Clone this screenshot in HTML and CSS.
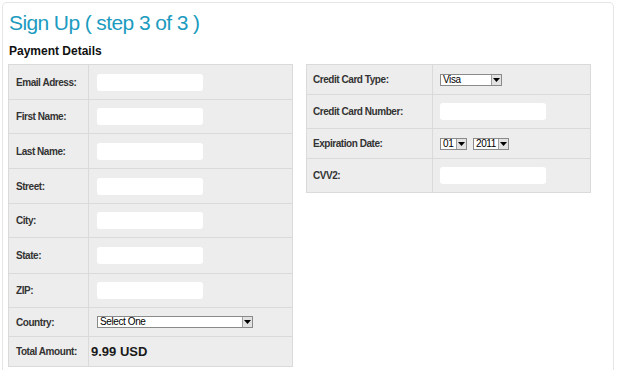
FILE: index.html
```html
<!DOCTYPE html>
<html>
<head>
<meta charset="utf-8">
<title>Sign Up</title>
<link rel="stylesheet" href="styles.css">
</head>
<body>
<div class="panel">
  <h1 class="title">Sign Up ( step 3 of 3 )</h1>
  <h2 class="section">Payment Details</h2>
  <div class="columns">
    <table class="form form-left">
      <tr class="h35"><th>Email Adress:</th><td><input class="field" type="text"></td></tr>
      <tr class="h34"><th>First Name:</th><td><input class="field" type="text"></td></tr>
      <tr class="h35"><th>Last Name:</th><td><input class="field" type="text"></td></tr>
      <tr class="h35"><th>Street:</th><td><input class="field" type="text"></td></tr>
      <tr class="h34"><th>City:</th><td><input class="field" type="text"></td></tr>
      <tr class="h36"><th>State:</th><td><input class="field" type="text"></td></tr>
      <tr class="h34"><th>ZIP:</th><td><input class="field" type="text"></td></tr>
      <tr class="h29"><th>Country:</th><td><span class="select sel-country"><span class="sel-val">Select One</span><span class="sel-arrow"><svg width="7" height="4" viewBox="0 0 7 4"><path d="M0 0H7L3.5 4Z" fill="#000"/></svg></span></span></td></tr>
      <tr class="h30"><th>Total Amount:</th><td class="amount">9.99 USD</td></tr>
    </table>
    <table class="form form-right">
      <tr class="h30"><th>Credit Card Type:</th><td><span class="select sel-type"><span class="sel-val">Visa</span><span class="sel-arrow"><svg width="7" height="4" viewBox="0 0 7 4"><path d="M0 0H7L3.5 4Z" fill="#000"/></svg></span></span></td></tr>
      <tr class="h34"><th>Credit Card Number:</th><td><input class="field" type="text"></td></tr>
      <tr class="h30"><th>Expiration Date:</th><td><div class="date-row"><span class="select sel-month"><span class="sel-val">01</span><span class="sel-arrow"><svg width="7" height="4" viewBox="0 0 7 4"><path d="M0 0H7L3.5 4Z" fill="#000"/></svg></span></span><span class="select sel-year"><span class="sel-val">2011</span><span class="sel-arrow"><svg width="7" height="4" viewBox="0 0 7 4"><path d="M0 0H7L3.5 4Z" fill="#000"/></svg></span></span></div></td></tr>
      <tr class="h34"><th>CVV2:</th><td><input class="field" type="text"></td></tr>
    </table>
  </div>
</div>
</body>
</html>
```

FILE: styles.css
```css
html, body {
  margin: 0;
  padding: 0;
  background: #ffffff;
}

body {
  font-family: "Liberation Sans", Arial, sans-serif;
  color: #333333;
}

.panel {
  margin: 2px 0 0 2px;
  width: 612px;
  height: 368px;
  border: 1px solid #e6e6e6;
  border-bottom: none;
  border-radius: 5px 5px 0 0;
  padding: 8px 0 0 5px;
  box-sizing: border-box;
}

.title {
  margin: 0;
  font-size: 21px;
  font-weight: normal;
  line-height: 24px;
  letter-spacing: -0.6px;
  color: #1c9bbf;
  padding-left: 1px;
}

.section {
  margin: 9px 0 6px 0;
  font-size: 12px;
  line-height: 14px;
  font-weight: bold;
  color: #111111;
  padding-left: 1px;
}

.columns {
  display: flex;
  align-items: flex-start;
  gap: 13px;
}

.form {
  border-collapse: collapse;
  background: #ededed;
  table-layout: fixed;
}

.form-left {
  width: 285px;
}

.form-right {
  width: 285px;
}

.form th,
.form td {
  border: 1px solid #dadada;
  padding: 0;
  vertical-align: middle;
  text-align: left;
}

.form th {
  font-size: 10px;
  font-weight: bold;
  letter-spacing: -0.45px;
  color: #333333;
  padding-left: 7px;
}

.form-left th {
  width: 72px;
}

.form-right th {
  width: 119px;
  padding-left: 6px;
}

.form td {
  padding-left: 8px;
}

.form-right td {
  padding-left: 7px;
}

.h29 { height: 29px; }
.h30 { height: 30px; }
.h34 { height: 34px; }
.h35 { height: 35px; }
.h36 { height: 36px; }

.field {
  display: block;
  width: 106px;
  height: 17px;
  border: none;
  border-radius: 3px;
  background: #ffffff;
  padding: 0;
  margin: 0;
  outline: none;
}

.amount {
  font-size: 13px;
  font-weight: bold;
  color: #1a1a1a;
}

.form-left td.amount {
  padding-left: 2px;
}

.select {
  display: flex;
  align-items: stretch;
  height: 12px;
  box-sizing: border-box;
  border: 1px solid #8a8a8a;
  background: #ffffff;
  font-size: 10px;
  line-height: 10px;
  color: #000000;
}

.sel-val {
  flex: 1;
  padding-left: 2px;
  letter-spacing: -0.4px;
  white-space: nowrap;
  overflow: hidden;
}

.sel-arrow {
  width: 9px;
  border-left: 1px solid #a0a0a0;
  background: #e2e2e2;
  display: flex;
  align-items: center;
  justify-content: center;
}

.sel-country {
  width: 156px;
}

.sel-type {
  width: 62px;
}

.date-row {
  display: flex;
  gap: 6px;
}

.sel-month {
  width: 27px;
}

.sel-year {
  width: 36px;
}
```
